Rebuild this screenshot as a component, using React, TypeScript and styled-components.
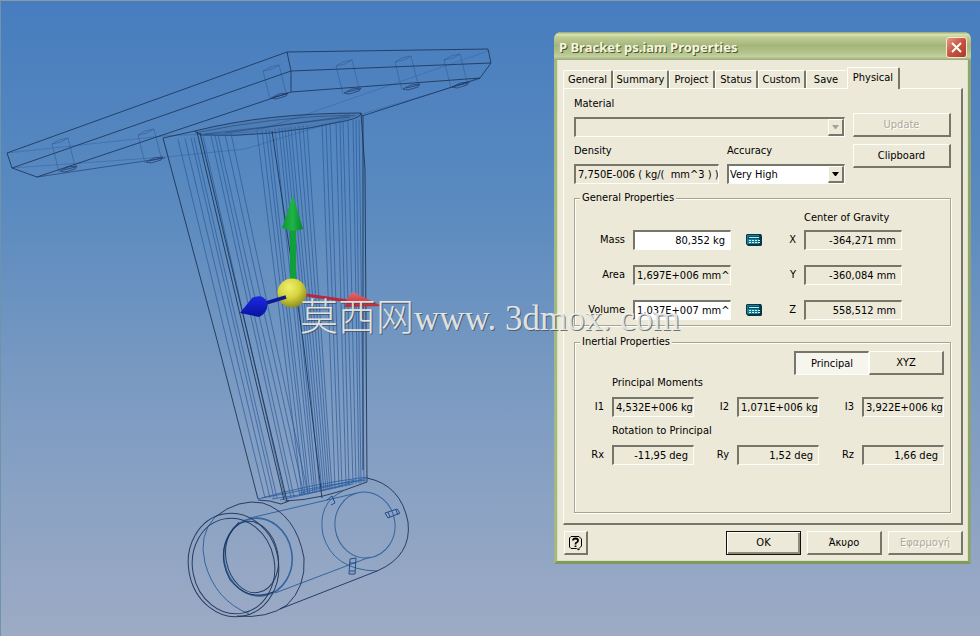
import React from "react";
import styled, { createGlobalStyle, css } from "styled-components";

const face = "#ece9d8";
const dark = "#77766a";
const light = "#fffffa";

const GlobalStyle = createGlobalStyle`
  * { box-sizing: border-box; }
  body { margin: 0; }
  body, button, input, select {
    font-family: "DejaVu Sans Condensed", "DejaVu Sans", sans-serif;
    font-stretch: condensed;
    font-size: 11px;
    line-height: 14px;
    color: #000;
  }
`;

const Desktop = styled.main`
  position: relative;
  display: flex;
  align-items: flex-start;
  justify-content: space-between;
  min-height: 100vh;
  overflow: hidden;
  padding-right: 9px;
  border-top: 1px solid #8a9aa8;
  border-left: 1px solid #6f93a8;
  background: linear-gradient(#477dbf, #5a8abf 32%, #7c9bc2 62%, #9dabc5);
`;

const Drawing = styled.svg`
  flex: 1 1 0;
  min-width: 0;
  height: 635px;
  fill: none;
`;

const Dialog = styled.section`
  flex: 0 0 417px;
  margin-top: 31px;
  border: 3px solid #a3b984;
  border-top: 0;
  border-right-color: #8ea56f;
  border-bottom-color: #7f9963;
  border-radius: 7px 7px 0 0;
  background: ${face};
  box-shadow: inset 1px 0 #dde2bd, inset -1px -1px #dde2bd;
`;

const TitleBar = styled.header`
  display: flex;
  align-items: center;
  justify-content: space-between;
  height: 28px;
  margin: 0 -3px;
  padding: 2px 4px 0 5px;
  border-radius: 7px 7px 0 0;
  background: linear-gradient(#93a873 0, #d8e2ae 9%, #bdcb92 20%, #a5b67c 48%, #b2c28a 72%, #c3d09e 88%, #98aa78 100%);
`;

const Title = styled.h1`
  margin: 0;
  font: bold 13px/18px "Noto Sans", sans-serif;
  color: #f6f5dc;
  text-shadow: 1px 1px #4b5530;
`;

const CloseButton = styled.button`
  display: grid;
  place-items: center;
  width: 21px;
  height: 21px;
  padding: 0;
  border: 1px solid #f7e9d8;
  border-radius: 3px;
  background: linear-gradient(135deg, #e29a85, #c9523d 50%, #a83c2c);
`;

const Body = styled.div`
  padding: 7px 5px 6px 6px;
`;

const Tabs = styled.div`
  display: flex;
  align-items: flex-end;
  height: 21px;
`;

const Tab = styled.button<{ $w: number; $active?: boolean; $last?: boolean }>`
  flex: 0 0 ${(p) => p.$w}px;
  height: 18px;
  padding: 0;
  white-space: nowrap;
  border: solid;
  border-width: 1px 2px 0 1px;
  border-color: ${light} ${(p) => (p.$last ? face : dark)} ${face} ${light};
  border-radius: 2px 2px 0 0;
  background: ${face};
  ${(p) =>
    p.$active &&
    css`
      position: relative;
      height: 22px;
      margin-bottom: -1px;
      padding-bottom: 2px;
    `}
`;

const Panel = styled.div`
  padding: 8px 10px 10px 10px;
  border: solid;
  border-width: 1px 2px 2px 1px;
  border-color: ${light} ${dark} ${dark} ${light};
`;

const TopGrid = styled.div`
  display: grid;
  grid-template-columns: 1fr 98px;
  column-gap: 8px;
`;

const Stack = styled.div`
  display: flex;
  flex-direction: column;
  gap: 6px;
`;

const SideButtons = styled(Stack)`
  gap: 7px;
  padding-top: 16px;
`;

const Pair = styled.div`
  display: grid;
  grid-template-columns: 145px 1fr;
  gap: 6px 8px;
  margin-top: 1px;
`;

const Caption = styled.label<{ $wide?: boolean }>`
  white-space: nowrap;
  ${(p) => p.$wide && css`grid-column: 2 / -1;`}
`;

const SideLabel = styled.label`
  text-align: right;
`;

const sunken = css`
  width: 100%;
  min-width: 0;
  height: 20px;
  border: solid;
  border-width: 2px 1px 1px 2px;
  border-color: ${dark} ${light} ${light} ${dark};
  border-radius: 0;
  outline: 0;
`;

const Field = styled.input<{ $white?: boolean; $align?: string }>`
  ${sunken}
  padding: ${(p) => (p.$align === "left" ? "0 0 0 2px" : "0 5px 0 3px")};
  text-align: ${(p) => p.$align || "right"};
  background: ${(p) => (p.$white ? "#fff" : face)};
`;

const SelectBox = styled.div`
  position: relative;
  display: flex;
`;

const Select = styled.select`
  ${sunken}
  appearance: none;
  padding: 0 18px 0 1px;
  background: #fff;
  &:disabled { background: ${face}; opacity: 1; }
`;

const Arrow = styled.span<{ $off?: boolean }>`
  position: absolute;
  top: 2px;
  right: 1px;
  bottom: 1px;
  display: grid;
  place-items: center;
  width: 16px;
  border: solid;
  border-width: 1px 2px 2px 1px;
  border-color: ${light} ${dark} ${dark} ${light};
  background: ${face};
  pointer-events: none;
  color: ${(p) => (p.$off ? "#a5a392" : "#000")};
`;

const Button = styled.button<{ $primary?: boolean; $pressed?: boolean; $w?: string }>`
  width: ${(p) => p.$w || "100%"};
  height: 24px;
  padding: 0;
  border: solid;
  border-width: 1px 2px 2px 1px;
  border-color: ${light} ${dark} ${dark} ${light};
  background: ${face};
  &:disabled { color: #aca999; text-shadow: 1px 1px #fff; }
  ${(p) =>
    p.$pressed &&
    css`
      border-width: 2px 1px 1px 2px;
      border-color: ${dark} ${light} ${light} ${dark};
      background: #f6f5ee;
    `}
  ${(p) =>
    p.$primary &&
    css`
      border: 1px solid #111;
      box-shadow: inset 1px 1px ${light}, inset -2px -2px #8d8b7c;
    `}
`;

const Group = styled.fieldset<{ $tall?: boolean }>`
  min-width: 0;
  min-height: ${(p) => (p.$tall ? 178 : 134)}px;
  margin: ${(p) => (p.$tall ? 9 : 7)}px 0 0;
  padding: 6px 6px 5px 0;
  border: 1px solid #a5a392;
  box-shadow: 1px 1px ${light}, inset 1px 1px ${light};
`;

const Legend = styled.legend`
  margin-left: 5px;
  padding: 0 2px;
  background: ${face};
`;

const GravityHead = styled.div`
  margin-bottom: 5px;
  padding-left: 229px;
  white-space: nowrap;
`;

const GeneralGrid = styled.div`
  display: grid;
  grid-template-columns: 50px 98px 23px 26px 98px;
  grid-auto-rows: 20px;
  align-items: center;
  column-gap: 8px;
  row-gap: 15px;
`;

const CalcButton = styled.button`
  justify-self: end;
  display: grid;
  width: 16px;
  height: 13px;
  padding: 0;
  border: 0;
  background: transparent;
`;

const Modes = styled.div`
  display: grid;
  grid-template-columns: 75px 75px;
  justify-content: end;
  margin-top: -4px;
`;

const InertiaGrid = styled.div`
  display: grid;
  grid-template-columns: repeat(3, 27px 1fr);
  align-items: center;
  gap: 7px 8px;
  padding: 1px 0 0 2px;
`;

const Footer = styled.footer`
  display: flex;
  gap: 6px;
  padding: 6px 0 0 1px;
`;

const HelpButton = styled(Button)`
  display: grid;
  place-items: center;
  margin-right: auto;
`;

const Watermark = styled.div`
  position: absolute;
  left: 299px;
  top: 286px;
  white-space: nowrap;
  pointer-events: none;
  font: 35px/54px "Liberation Serif", "Noto Sans CJK SC", serif;
  color: rgba(240, 243, 240, 0.88);
  text-shadow: 1px 1px rgba(70, 75, 80, 0.75);
`;

const Hanzi = styled.span`
  font: 300 38px/54px "Noto Sans CJK SC", sans-serif;
`;

const strands = (a: number[], b: number[], y0: (x: number) => number, y1: (x: number) => number) =>
  a.map((x, i) => `M${x} ${y0(x)}L${b[i]} ${y1(b[i])}`).join("");

const rimTop = (x: number) => 141 - (x - 163) * 0.11;
const rimBottom = (x: number) => (x < 290 ? 498 : 498 - (x - 290) * 0.21);

const leftFamily = strands(
  [178, 185, 191, 194, 203, 211, 215, 218, 225, 231],
  [265, 270, 274, 277, 285, 291, 294, 300, 304, 308],
  rimTop, rimBottom
);
const middleFamily = strands(
  [257, 262, 266, 269, 275, 279, 282, 285, 288, 291, 295, 299, 303, 307],
  [302, 305, 308, 310, 313, 315, 317, 320, 322, 324, 326, 328, 330, 332],
  rimTop, rimBottom
);
const rightFamily = strands(
  [322, 326, 330, 336, 340, 343, 348, 353, 356, 359],
  [335, 339, 342, 346, 349, 353, 356, 359, 361, 364],
  rimTop, rimBottom
);

function Bolt({ x, y }: { x: number; y: number }) {
  return (
    <g transform={`translate(${x} ${y})`}>
      <path stroke="#356098" strokeOpacity=".65" d="M0 4L7 0L16 -2L23 26M0 4L7 32M16 -2L9 2L0 4" />
      <path stroke="#253f70" strokeOpacity=".8" d="M8 31L16 27L25 26L23 29L13 32ZM11 30L24 27" />
    </g>
  );
}

function Bracket() {
  return (
    <Drawing viewBox="1 1 553 635" preserveAspectRatio="xMinYMin meet" role="img" aria-label="P Bracket wireframe" overflow="visible">
      <defs>
        <radialGradient id="ball" cx=".4" cy=".3" r=".75">
          <stop offset="0" stopColor="#f0ef70" />
          <stop offset=".5" stopColor="#d5d43c" />
          <stop offset="1" stopColor="#85851c" />
        </radialGradient>
        <linearGradient id="green"><stop stopColor="#0f9435" /><stop offset=".5" stopColor="#20b448" /><stop offset="1" stopColor="#078629" /></linearGradient>
        <linearGradient id="red" x2="0" y2="1"><stop stopColor="#e66b70" /><stop offset="1" stopColor="#ba2733" /></linearGradient>
        <linearGradient id="blue" x2="0" y2="1"><stop stopColor="#1a2ae0" /><stop offset="1" stopColor="#0712a0" /></linearGradient>
      </defs>

      <g stroke="#3a6cab" strokeOpacity=".7">
        <path d="M7 153L163 136L252 132L290 120L488 51M12 168L165 157L245 149L291 135L480 79" />
        <path d="M37 177L165 158" stroke="#23456f" />
      </g>
      <Bolt x={52} y={140} />
      <Bolt x={138} y={131} />
      <Bolt x={263} y={67} />
      <Bolt x={336} y={62} />
      <Bolt x={395} y={58} />
      <Bolt x={444} y={56} />

      <g stroke="#1d3558" strokeOpacity=".85">
        <path d="M7 153L287 52L488 49L491 63L480 78L362 116M12 168L291 71L491 63M37 177L291 92L480 78M7 153L12 168L37 177M287 52L291 71V92" />
        <path d="M163 138L195 131Q265 113 361 113Q363 117 345 121Q270 138 201 135L195 131" fill="#31598e" fillOpacity=".18" />
        <path d="M195 133Q270 117 350 115M205 134L350 117M225 133L355 115" strokeOpacity=".45" />
      </g>

      <g stroke="#2c5c9b" strokeOpacity=".72">
        <path d={leftFamily} />
        <path d={middleFamily} />
        <path d={rightFamily} />
      </g>
      <path stroke="#2b5da0" strokeOpacity=".8" d="M258 499Q310 484 367 477M262 498L330 485L366 480M272 499Q325 492 366 478M280 500L352 484M300 493L355 480" />
      <g stroke="#1d3558" strokeOpacity=".9">
        <path d="M163 138L217 340L258 499M197 132L246 340L284 500M361 113L365 170L367 482" />
        <path d="M200 133L249 340L287 501M272 131L303 340L322 498" />
        <path d="M363 115V470M285 501Q322 500 367 482" />
      </g>

      <g stroke="#34659f">
        <ellipse cx="365" cy="525" rx="30" ry="33" transform="rotate(-8 365 525)" />
        <path d="M343 491Q317 503 323 535Q333 570 377 571M250 518L357 493M275 593L370 557" />
        <path d="M350 559L356 558L355 574L349 574ZM349 563H356M350 571H355M385 513L397 509L400 513L388 518ZM388 512L390 517M396 510L398 515M327 500L332 496L335 503L331 505" stroke="#244d86" />
        <ellipse cx="258" cy="557" rx="34" ry="39" transform="rotate(-10 258 557)" strokeWidth="1.6" />
        <path d="M215 517Q198 535 205 563Q215 600 249 614" />
      </g>
      <g stroke="#1c3256" strokeOpacity=".9">
        <path d="M367 478Q401 485 408 522Q412 556 377 571L280 609" />
        <ellipse cx="233.500" cy="565" rx="45" ry="52" transform="rotate(-11 233.500 565)" />
        <ellipse cx="233.500" cy="566" rx="41" ry="48" transform="rotate(-11 233.500 566)" />
        <path d="M215 517Q239 498 263 503Q296 514 304 558Q306 587 287 605Q267 619 237 616" />
        <path d="M258 500Q270 500 281 504L289 501" />
        <ellipse cx="252" cy="557" rx="26" ry="36" transform="rotate(-11 252 557)" />
        <path d="M239 522Q213 548 230 580Q248 602 273 592" />
      </g>

      <path d="M290 228H296V282H290Z" fill="#10a03a" />
      <path d="M293 195L303 229Q293 233 282 228Z" fill="url(#green)" />
      <path d="M306 295L348 301" stroke="#b5283d" strokeWidth="3" />
      <path d="M353 292L382 306L345 307Q346 297 353 292Z" fill="url(#red)" />
      <circle cx="292" cy="293" r="14.500" fill="url(#ball)" />
      <path d="M286 297L266 303" stroke="#10189a" strokeWidth="3.500" />
      <path d="M240 313L252 298Q263 293 267 302Q269 312 259 317Z" fill="url(#blue)" />
    </Drawing>
  );
}

function Calculator({ label }: { label: string }) {
  return (
    <CalcButton aria-label={label}>
      <svg width="16" height="13" viewBox="0 0 16 13">
        <path d="M1 0H15L16 2V11L15 12H2L0 10V1Z" fill="#06364a" />
        <path d="M1 1H13V10H1Z" fill="#178097" />
        <path d="M2 2H14V5H2Z" fill="#0b4c60" />
        <path d="M3 3H13V4H3Z" fill="#b4f0ee" />
        <path d="M3 6.500H5M6 6.500H8M9 6.500H11M12 6.500H14M3 8.500H5M6 8.500H8M9 8.500H11M12 8.500H14" stroke="#d6f5f2" />
      </svg>
    </CalcButton>
  );
}

function DropArrow({ off }: { off?: boolean }) {
  return (
    <Arrow $off={off}>
      <svg width="7" height="4" viewBox="0 0 7 4" fill="currentColor"><path d="M0 0H7L4 4H3Z" /></svg>
    </Arrow>
  );
}

const tabs = [
  { name: "General", w: 50 },
  { name: "Summary", w: 56 },
  { name: "Project", w: 46 },
  { name: "Status", w: 43 },
  { name: "Custom", w: 48 },
  { name: "Save", w: 41 },
  { name: "Physical", w: 53 },
];

const rows = [
  { name: "Mass", value: "80,352 kg", axis: "X", gravity: "-364,271 mm", editable: true },
  { name: "Area", value: "1,697E+006 mm^", axis: "Y", gravity: "-360,084 mm", editable: false },
  { name: "Volume", value: "1,037E+007 mm^", axis: "Z", gravity: "558,512 mm", editable: true },
];

const moments = [["I1", "4,532E+006 kg"], ["I2", "1,071E+006 kg"], ["I3", "3,922E+006 kg"]];
const rotations = [["Rx", "-11,95 deg"], ["Ry", "1,52 deg"], ["Rz", "1,66 deg"]];

function Cells({ items, align }: { items: string[][]; align: string }) {
  return (
    <>
      {items.map(([name, value]) => (
        <React.Fragment key={name}>
          <SideLabel htmlFor={name}>{name}</SideLabel>
          <Field id={name} readOnly $align={align} defaultValue={value} />
        </React.Fragment>
      ))}
    </>
  );
}

export default function App() {
  return (
    <Desktop>
      <GlobalStyle />
      <Bracket />
      <Dialog role="dialog" aria-labelledby="title">
        <TitleBar>
          <Title id="title">P Bracket ps.iam Properties</Title>
          <CloseButton aria-label="Close">
            <svg width="11" height="11" viewBox="0 0 11 11" stroke="#fff" strokeWidth="2"><path d="M1 1L10 10M10 1L1 10" /></svg>
          </CloseButton>
        </TitleBar>
        <Body>
          <Tabs role="tablist">
            {tabs.map((t) => (
              <Tab key={t.name} role="tab" $w={t.w} $active={t.name === "Physical"} $last={t.name === "Save"} aria-selected={t.name === "Physical"}>
                {t.name}
              </Tab>
            ))}
          </Tabs>
          <Panel role="tabpanel">
            <TopGrid>
              <Stack>
                <Caption htmlFor="material">Material</Caption>
                <SelectBox>
                  <Select id="material" disabled />
                  <DropArrow off />
                </SelectBox>
                <Pair>
                  <Caption htmlFor="density">Density</Caption>
                  <Caption htmlFor="accuracy">Accuracy</Caption>
                  <Field id="density" readOnly $align="left" defaultValue="7,750E-006 ( kg/(  mm^3 ) )" />
                  <SelectBox>
                    <Select id="accuracy"><option>Very High</option></Select>
                    <DropArrow />
                  </SelectBox>
                </Pair>
              </Stack>
              <SideButtons>
                <Button disabled>Update</Button>
                <Button>Clipboard</Button>
              </SideButtons>
            </TopGrid>

            <Group>
              <Legend>General Properties</Legend>
              <GravityHead>Center of Gravity</GravityHead>
              <GeneralGrid>
                {rows.map((r) => (
                  <React.Fragment key={r.name}>
                    <SideLabel htmlFor={r.name}>{r.name}</SideLabel>
                    <Field id={r.name} $white={r.editable} $align={r.name === "Mass" ? "right" : "left"} defaultValue={r.value} />
                    {r.editable ? <Calculator label={`Calculate ${r.name}`} /> : <span />}
                    <SideLabel htmlFor={r.axis}>{r.axis}</SideLabel>
                    <Field id={r.axis} readOnly defaultValue={r.gravity} />
                  </React.Fragment>
                ))}
              </GeneralGrid>
            </Group>

            <Group $tall>
              <Legend>Inertial Properties</Legend>
              <Modes>
                <Button $pressed aria-pressed="true">Principal</Button>
                <Button aria-pressed="false">XYZ</Button>
              </Modes>
              <InertiaGrid>
                <Caption as="div" $wide>Principal Moments</Caption>
                <Cells items={moments} align="left" />
                <Caption as="div" $wide>Rotation to Principal</Caption>
                <Cells items={rotations} align="right" />
              </InertiaGrid>
            </Group>
          </Panel>
          <Footer>
            <HelpButton $w="24px" aria-label="Help">
              <svg width="15" height="16" viewBox="0 0 15 16" fill="none" stroke="#000">
                <path d="M3 1.500H11L13.500 4V11L11 13.500V15L8.500 13.500H3L1.500 12V3Z" />
                <path d="M5 5.500Q5 3.500 7.500 3.500Q10 3.500 10 5.500Q10 7 8.500 7.500Q7.500 8 7.500 9.500M7.500 10.500V12" strokeWidth="1.800" />
              </svg>
            </HelpButton>
            <Button $w="75px" $primary>OK</Button>
            <Button $w="75px">Άκυρο</Button>
            <Button $w="75px" disabled>Εφαρμογή</Button>
          </Footer>
        </Body>
      </Dialog>
      <Watermark><Hanzi>莫西网</Hanzi>www. 3dmox. com</Watermark>
    </Desktop>
  );
}
